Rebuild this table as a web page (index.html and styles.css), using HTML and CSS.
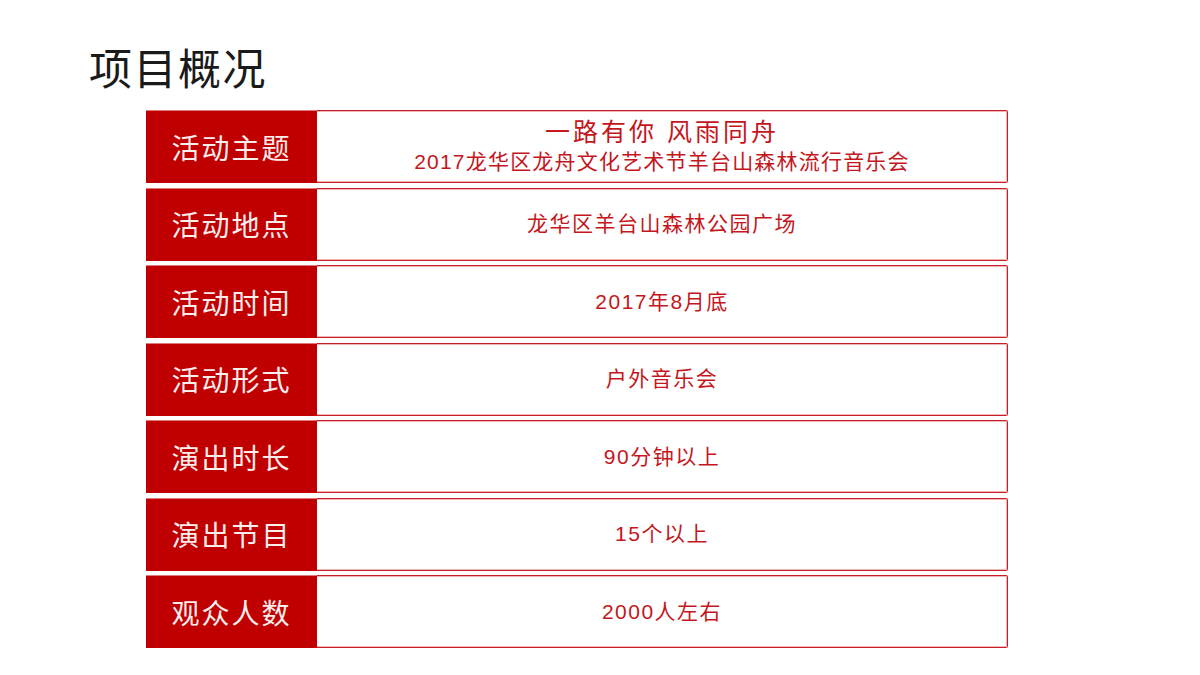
FILE: index.html
```html
<!DOCTYPE html>
<html lang="zh-CN">
<head>
<meta charset="utf-8">
<link rel="stylesheet" href="styles.css">
</head>
<body>
<div class="page">
  <h1 class="title">项目概况</h1>
  <div class="table">
    <div class="row">
      <div class="label">活动主题</div>
      <div class="value">
        <div class="theme-main">一路有你 风雨同舟</div>
        <div class="theme-sub">2017龙华区龙舟文化艺术节羊台山森林流行音乐会</div>
      </div>
    </div>
    <div class="row">
      <div class="label">活动地点</div>
      <div class="value">龙华区羊台山森林公园广场</div>
    </div>
    <div class="row">
      <div class="label">活动时间</div>
      <div class="value">2017年8月底</div>
    </div>
    <div class="row">
      <div class="label">活动形式</div>
      <div class="value">户外音乐会</div>
    </div>
    <div class="row">
      <div class="label">演出时长</div>
      <div class="value">90分钟以上</div>
    </div>
    <div class="row">
      <div class="label">演出节目</div>
      <div class="value">15个以上</div>
    </div>
    <div class="row">
      <div class="label">观众人数</div>
      <div class="value">2000人左右</div>
    </div>
  </div>
</div>
</body>
</html>
```

FILE: styles.css
```css
html, body {
  margin: 0;
  padding: 0;
  background: #ffffff;
}
body {
  font-family: "Liberation Sans", "Noto Sans CJK SC", sans-serif;
}
.page {
  width: 1200px;
  height: 675px;
  box-sizing: border-box;
  padding: 41px 0 0 89px;
}
.title {
  margin: 0;
  font-size: 43px;
  font-weight: 400;
  line-height: 58px;
  color: #1a1a1a;
  letter-spacing: 1.5px;
}
.table {
  margin: 11px 0 0 57px;
  width: 862px;
  display: flex;
  flex-direction: column;
  gap: 4.5px;
}
.row {
  display: flex;
  height: 73px;
}
.label {
  width: 171px;
  flex: none;
  background: #c00000;
  color: #fdeeee;
  font-size: 28px;
  letter-spacing: 2px;
  display: flex;
  align-items: center;
  justify-content: center;
  box-shadow: inset 0 1px 0 #e07a7a;
}
.value {
  flex: 1;
  box-sizing: border-box;
  border: 1px solid #c8202a;
  border-left: none;
  box-shadow: inset -1px -1px 0 #f0b4b4, inset 0 1px 0 #f0b4b4;
  border-radius: 0 2px 2px 0;
  color: #c4161c;
  font-size: 21px;
  letter-spacing: 1.5px;
  display: flex;
  flex-direction: column;
  align-items: center;
  justify-content: center;
  line-height: 1.3;
}
.theme-main {
  font-size: 25px;
  letter-spacing: 3px;
  line-height: 29px;
}
.theme-sub {
  font-size: 21px;
  letter-spacing: 1.2px;
  line-height: 29px;
}
```
